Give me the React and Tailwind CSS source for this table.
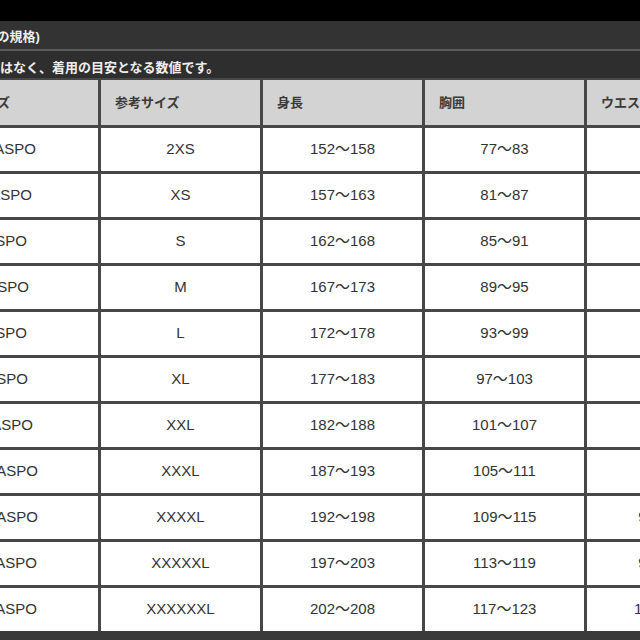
import React from 'react'

const rows = [
  { size: '2XS', height: '152〜158', chest: '77〜83', waist: '62〜68', pr: 'pr-[62px]' },
  { size: 'XS', height: '157〜163', chest: '81〜87', waist: '66〜72', pr: 'pr-[66px]' },
  { size: 'S', height: '162〜168', chest: '85〜91', waist: '70〜76', pr: 'pr-[71px]' },
  { size: 'M', height: '167〜173', chest: '89〜95', waist: '74〜80', pr: 'pr-[69px]' },
  { size: 'L', height: '172〜178', chest: '93〜99', waist: '78〜84', pr: 'pr-[71px]' },
  { size: 'XL', height: '177〜183', chest: '97〜103', waist: '82〜88', pr: 'pr-[70px]' },
  { size: 'XXL', height: '182〜188', chest: '101〜107', waist: '86〜92', pr: 'pr-[65px]' },
  { size: 'XXXL', height: '187〜193', chest: '105〜111', waist: '90〜96', pr: 'pr-[60px]' },
  { size: 'XXXXL', height: '192〜198', chest: '109〜115', waist: '94〜100', pr: 'pr-[60px]' },
  { size: 'XXXXXL', height: '197〜203', chest: '113〜119', waist: '98〜104', pr: 'pr-[61px]' },
  { size: 'XXXXXXL', height: '202〜208', chest: '117〜123', waist: '102〜108', pr: 'pr-[61px]' },
]

const headers = ['参考サイズ', '身長', '胸囲', 'ウエスト']

export default function App() {
  return (
    <div className="w-[640px] h-[640px] overflow-hidden bg-black font-['Liberation_Sans','Noto_Sans_CJK_JP',sans-serif]">
      <div className="h-[21px] bg-black" />

      {/* title band */}
      <div className="h-[28px] bg-[#333333] flex items-center overflow-hidden">
        <p className="-ml-[52px] pt-[3px] text-[13px] font-bold text-[#eeeeee] whitespace-nowrap">
          (JASPOの規格)
        </p>
      </div>
      <div className="h-[2px] bg-[#5a5a5a]" />
      <div className="h-[27px] bg-[#2e2e2e] flex items-end pb-[1px] overflow-hidden">
        <p className="-ml-[52px] text-[13px] font-bold text-[#eeeeee] whitespace-nowrap">
          ※実寸ではなく、着用の目安となる数値です。
        </p>
      </div>
      <div className="h-[2px] bg-[#474747]" />

      {/* table */}
      <div className="overflow-hidden bg-[#474747]">
        <div className="-ml-[61px] w-max grid grid-cols-[repeat(5,159px)] gap-[3px]">
          <div className="h-[45px] bg-[#d3d3d3] flex items-center justify-end pr-[88px] text-[13px] font-bold text-[#3a3a3a]">
            サイズ
          </div>
          {headers.map((h) => (
            <div key={h} className="h-[45px] bg-[#d3d3d3] flex items-center pl-[14px] text-[13px] font-bold text-[#3a3a3a]">
              {h}
            </div>
          ))}

          {rows.map((r) => (
            <React.Fragment key={r.size}>
              <div className={`h-[43px] bg-white flex items-center justify-end text-[15px] text-[#333333] ${r.pr}`}>
                JASPO
              </div>
              <div className="h-[43px] bg-white flex items-center justify-center text-[15px] text-[#333333]">
                {r.size}
              </div>
              <div className="h-[43px] bg-white flex items-center justify-center text-[15px] text-[#333333]">
                {r.height}
              </div>
              <div className="h-[43px] bg-white flex items-center justify-center text-[15px] text-[#333333]">
                {r.chest}
              </div>
              <div className="h-[43px] bg-white flex items-center justify-center text-[15px] text-[#333333]">
                {r.waist}
              </div>
            </React.Fragment>
          ))}
        </div>
      </div>

      <div className="h-[9px] bg-[#3a3a3a]" />
    </div>
  )
}
